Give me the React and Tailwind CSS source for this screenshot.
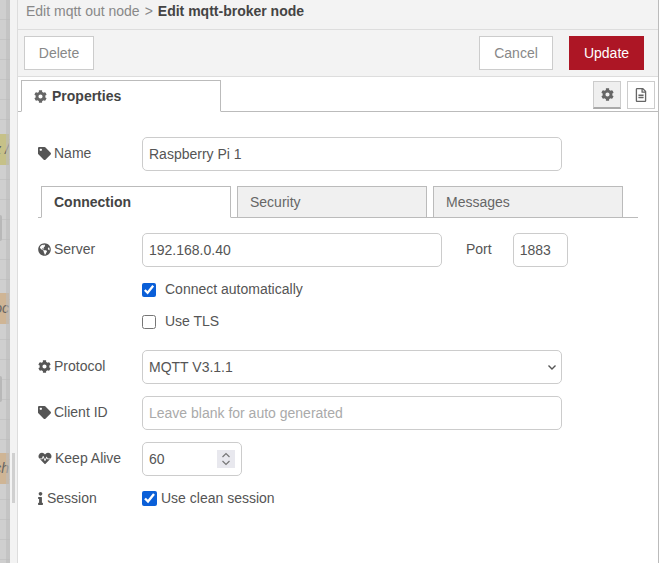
import { FaCog, FaTag, FaGlobeAmericas, FaHeartbeat, FaInfo, FaRegFileAlt } from 'react-icons/fa'

const inputCls = 'h-[34px] rounded-[5px] border border-[#ccc] bg-white px-[6px] text-[14px] text-[#555] outline-none placeholder:text-[#aaa]'

function Label({ icon: Icon, children, gap = 'gap-[3px]', iconCls = 'w-[13px]' }) {
  return (
    <div className={`flex w-[104px] shrink-0 items-center pb-[2px] ${gap} text-[14px] text-[#555]`}>
      <Icon className={`h-[13px] text-[#555] ${iconCls}`} />
      <span>{children}</span>
    </div>
  )
}

function SubTab({ active, children }) {
  return (
    <div
      className={`flex h-[32px] w-[190px] items-center border border-[#bbb] pl-[12px] text-[14px] ${
        active ? 'border-b-white bg-white font-bold text-[#444]' : 'bg-[#f0f0f0] text-[#666]'
      }`}
    >
      {children}
    </div>
  )
}

function CanvasNode({ top, color, text }) {
  return (
    <div className={`absolute left-0 flex h-[31px] w-[9px] items-center justify-end overflow-hidden whitespace-nowrap text-[14px] italic text-[#666] ${top} ${color}`}>
      {text}
    </div>
  )
}

export default function App() {
  return (
    <div className="flex h-[563px] w-[660px] overflow-hidden bg-white font-['Liberation_Sans',Arial,sans-serif]">
      {/* dimmed workspace behind the tray */}
      <div className="relative w-[10px] shrink-0 bg-[#cfcfcf] bg-[repeating-linear-gradient(180deg,transparent_0,transparent_19px,#c4c4c4_19px,#c4c4c4_20px)]">
        <CanvasNode top="top-[134px]" color="bg-[#c6c188]" text="z /" />
        <CanvasNode top="top-[293px]" color="bg-[#cfb595]" text="oc" />
        <CanvasNode top="top-[453px]" color="bg-[#cfb595]" text="ch" />
        <div className="absolute left-0 top-[215px] h-[26px] w-[2px] rounded-r bg-[#b8b8b8]" />
        <div className="absolute left-0 top-[376px] h-[26px] w-[2px] rounded-r bg-[#b8b8b8]" />
        <div className="absolute inset-y-0 right-0 w-[4px] bg-[#bdbdbd]/60" />
      </div>

      {/* sidebar strip */}
      <div className="relative w-[8px] shrink-0 border-r border-[#ddd] bg-[#f3f3f3]">
        <div className="absolute left-[2px] top-[453px] h-[50px] w-[3px] bg-[#d0d0d0]" />
      </div>

      {/* tray */}
      <div className="flex min-w-0 flex-1 flex-col">
        <div className="flex h-[30px] items-center border-b border-[#ddd] bg-[#f3f3f3] pl-[8px] pb-[6px] text-[14px] text-[#888]">
          <span>Edit mqtt out node</span>
          <span className="mx-[5px]">&gt;</span>
          <span className="font-bold text-[#444]">Edit mqtt-broker node</span>
        </div>

        <div className="flex h-[47px] items-center justify-between border-b border-[#ddd] bg-[#f3f3f3] pl-[6px] pr-[14px]">
          <button className="h-[34px] w-[70px] border border-[#ccc] bg-white text-[14px] text-[#888]">Delete</button>
          <div className="flex gap-[16px]">
            <button className="h-[34px] w-[74px] border border-[#ccc] bg-white text-[14px] text-[#888]">Cancel</button>
            <button className="h-[34px] w-[75px] bg-[#ad1625] text-[14px] text-white">Update</button>
          </div>
        </div>

        <div className="flex h-[35px] items-end justify-between border-b border-[#bbb] pl-[3px] pr-[3px]">
          <div className="relative top-[1px] flex h-[32px] w-[200px] items-center gap-[5px] border border-[#bbb] border-b-white bg-white pl-[12px] text-[14px] font-bold text-[#444]">
            <FaCog className="text-[13px] text-[#666]" />
            <span>Properties</span>
          </div>
          <div className="mb-[2px] flex gap-[6px]">
            <div className="flex h-[28px] w-[28px] items-center justify-center border border-[#ccc] border-b-[2px] border-b-[#aaa] bg-[#efefef]">
              <FaCog className="text-[13px] text-[#666]" />
            </div>
            <div className="flex h-[28px] w-[28px] items-center justify-center border border-[#ccc] bg-white">
              <FaRegFileAlt className="text-[14px] text-[#666]" />
            </div>
          </div>
        </div>

        <div className="flex flex-col pl-[20px]">
          <div className="mt-[25px] flex items-center">
            <Label icon={FaTag}>Name</Label>
            <input className={`${inputCls} w-[420px]`} defaultValue="Raspberry Pi 1" />
          </div>

          <div className="mt-[15px] flex h-[32px] w-[600px] gap-[6px] border-b border-[#bbb] pl-[3px]">
            <SubTab active>Connection</SubTab>
            <SubTab>Security</SubTab>
            <SubTab>Messages</SubTab>
          </div>

          <div className="mt-[15px] flex items-center">
            <Label icon={FaGlobeAmericas}>Server</Label>
            <input className={`${inputCls} w-[300px]`} defaultValue="192.168.0.40" />
            <span className="ml-[24px] pb-[2px] text-[14px] text-[#555]">Port</span>
            <input className={`${inputCls} ml-[21px] w-[55px]`} defaultValue="1883" />
          </div>

          <label className="ml-[104px] mt-[15px] flex h-[15px] items-center gap-[9px] text-[14px] text-[#555]">
            <input type="checkbox" defaultChecked className="m-0 h-[14px] w-[14px] accent-[#0a5fd8]" />
            Connect automatically
          </label>
          <label className="ml-[104px] mt-[17px] flex h-[15px] items-center gap-[9px] text-[14px] text-[#555]">
            <input type="checkbox" className="m-0 h-[14px] w-[14px]" />
            Use TLS
          </label>

          <div className="mt-[21px] flex items-center">
            <Label icon={FaCog}>Protocol</Label>
            <div className="relative">
              <select className={`${inputCls} w-[420px] appearance-none`} defaultValue="v311">
                <option value="v311">MQTT V3.1.1</option>
              </select>
              <svg className="pointer-events-none absolute right-[6px] top-[15px] h-[5px] w-[8px] text-[#555]" viewBox="0 0 8 5" fill="none" stroke="currentColor" strokeWidth="1.4">
                <path d="M0.5 0.5 4 4 7.5 0.5" />
              </svg>
            </div>
          </div>

          <div className="mt-[12px] flex items-center">
            <Label icon={FaTag}>Client ID</Label>
            <input className={`${inputCls} w-[420px]`} placeholder="Leave blank for auto generated" />
          </div>

          <div className="mt-[12px] flex items-center">
            <Label icon={FaHeartbeat} iconCls="w-[14px]">Keep Alive</Label>
            <div className="relative">
              <input className={`${inputCls} w-[100px]`} defaultValue="60" />
              <div className="absolute right-[7px] top-[8px] flex h-[18px] w-[18px] items-center justify-center bg-[#e8e8ee]">
                <svg className="h-[14px] w-[10px] text-[#777]" viewBox="0 0 10 14" fill="none" stroke="currentColor" strokeWidth="1.2">
                  <path d="M1.5 5 5 1.5 8.5 5M1.5 9 5 12.5 8.5 9" />
                </svg>
              </div>
            </div>
          </div>

          <div className="mt-[12px] flex items-center">
            <Label icon={FaInfo} iconCls="w-[5px]" gap="gap-[4px]">Session</Label>
            <label className="flex items-center gap-[4px] pb-[2px] text-[14px] text-[#555]">
              <input type="checkbox" defaultChecked className="m-0 h-[15px] w-[15px] accent-[#0a5fd8]" />
              Use clean session
            </label>
          </div>
        </div>
      </div>

      <div className="w-[2px] shrink-0 border-r border-white bg-[#bbb]" />
    </div>
  )
}
